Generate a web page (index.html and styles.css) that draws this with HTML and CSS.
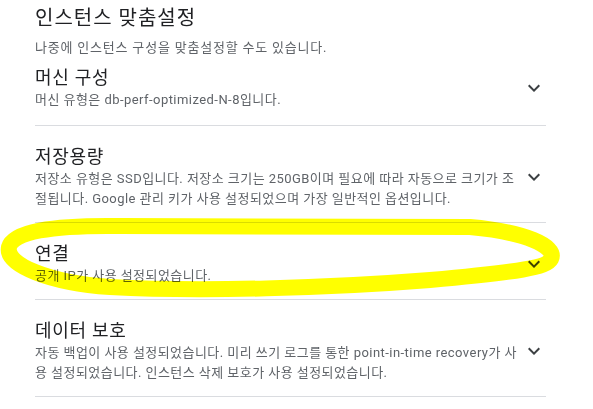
FILE: index.html
```html
<!DOCTYPE html>
<html lang="ko">
<head>
<meta charset="utf-8">
<link rel="stylesheet" href="styles.css">
</head>
<body>
<div class="page">
  <h1 class="title">인스턴스 맞춤설정</h1>
  <p class="subtitle">나중에 인스턴스 구성을 맞춤설정할 수도 있습니다.</p>

  <div class="row first">
    <div class="text">
      <div class="row-title">머신 구성</div>
      <div class="row-desc">머신 유형은 db-perf-optimized-N-8입니다.</div>
    </div>
    <svg class="chev" viewBox="0 0 24 24" width="24" height="24"><path d="M16.59 8.59L12 13.17 7.41 8.59 6 10l6 6 6-6z"/></svg>
  </div>

  <div class="row">
    <div class="text">
      <div class="row-title">저장용량</div>
      <div class="row-desc">저장소 유형은 SSD입니다. 저장소 크기는 250GB이며 필요에 따라 자동으로 크기가 조절됩니다. Google 관리 키가 사용 설정되었으며 가장 일반적인 옵션입니다.</div>
    </div>
    <svg class="chev" viewBox="0 0 24 24" width="24" height="24"><path d="M16.59 8.59L12 13.17 7.41 8.59 6 10l6 6 6-6z"/></svg>
  </div>

  <div class="row">
    <div class="text">
      <div class="row-title">연결</div>
      <div class="row-desc">공개 IP가 사용 설정되었습니다.</div>
    </div>
    <svg class="chev" viewBox="0 0 24 24" width="24" height="24"><path d="M16.59 8.59L12 13.17 7.41 8.59 6 10l6 6 6-6z"/></svg>
  </div>

  <div class="row">
    <div class="text">
      <div class="row-title">데이터 보호</div>
      <div class="row-desc">자동 백업이 사용 설정되었습니다. 미리 쓰기 로그를 통한 point-in-time recovery가 사용 설정되었습니다. 인스턴스 삭제 보호가 사용 설정되었습니다.</div>
    </div>
    <svg class="chev" viewBox="0 0 24 24" width="24" height="24"><path d="M16.59 8.59L12 13.17 7.41 8.59 6 10l6 6 6-6z"/></svg>
  </div>
</div>

<svg class="marker" viewBox="0 0 593 409" width="593" height="409">
  <path d="M120 226 L470 227 C525 232 557 246 551 259 C547 267 520 272 430 280 C330 288 200 292 110 287 C50 283 5 265 9 247 C13 232 50 225 120 226 Z"/>
</svg>
</body>
</html>
```

FILE: styles.css
```css
html, body {
  margin: 0;
  padding: 0;
  background: #ffffff;
}

body {
  font-family: Roboto, "Noto Sans CJK KR", sans-serif;
  color: #202124;
  position: relative;
  width: 593px;
  height: 409px;
  overflow: hidden;
}

.page {
  width: 511px;
  padding-left: 35px;
}

.title {
  margin: 4px 0 6px;
  font-size: 20px;
  line-height: 28px;
  font-weight: 400;
  letter-spacing: 1px;
  color: #202124;
}

.subtitle {
  margin: 0;
  font-size: 13px;
  line-height: 20px;
  letter-spacing: 0.8px;
  color: #5f6368;
}

.row {
  display: flex;
  align-items: center;
  padding: 19px 0 13px;
  border-bottom: 1px solid #dadce0;
}

.row.first {
  padding: 8px 0 15px;
}

.text {
  flex: 1;
  min-width: 0;
}

.row-title {
  font-size: 18px;
  line-height: 24px;
  letter-spacing: 0.7px;
  color: #202124;
}

.row-desc {
  font-size: 13px;
  line-height: 20px;
  letter-spacing: 0.45px;
  color: #5f6368;
}

.chev {
  flex: none;
  fill: #3c4043;
}

.marker {
  position: absolute;
  left: 0;
  top: 0;
  pointer-events: none;
  mix-blend-mode: multiply;
}

.marker path {
  fill: none;
  stroke: #ffff00;
  stroke-width: 16;
  stroke-linejoin: round;
}
```
